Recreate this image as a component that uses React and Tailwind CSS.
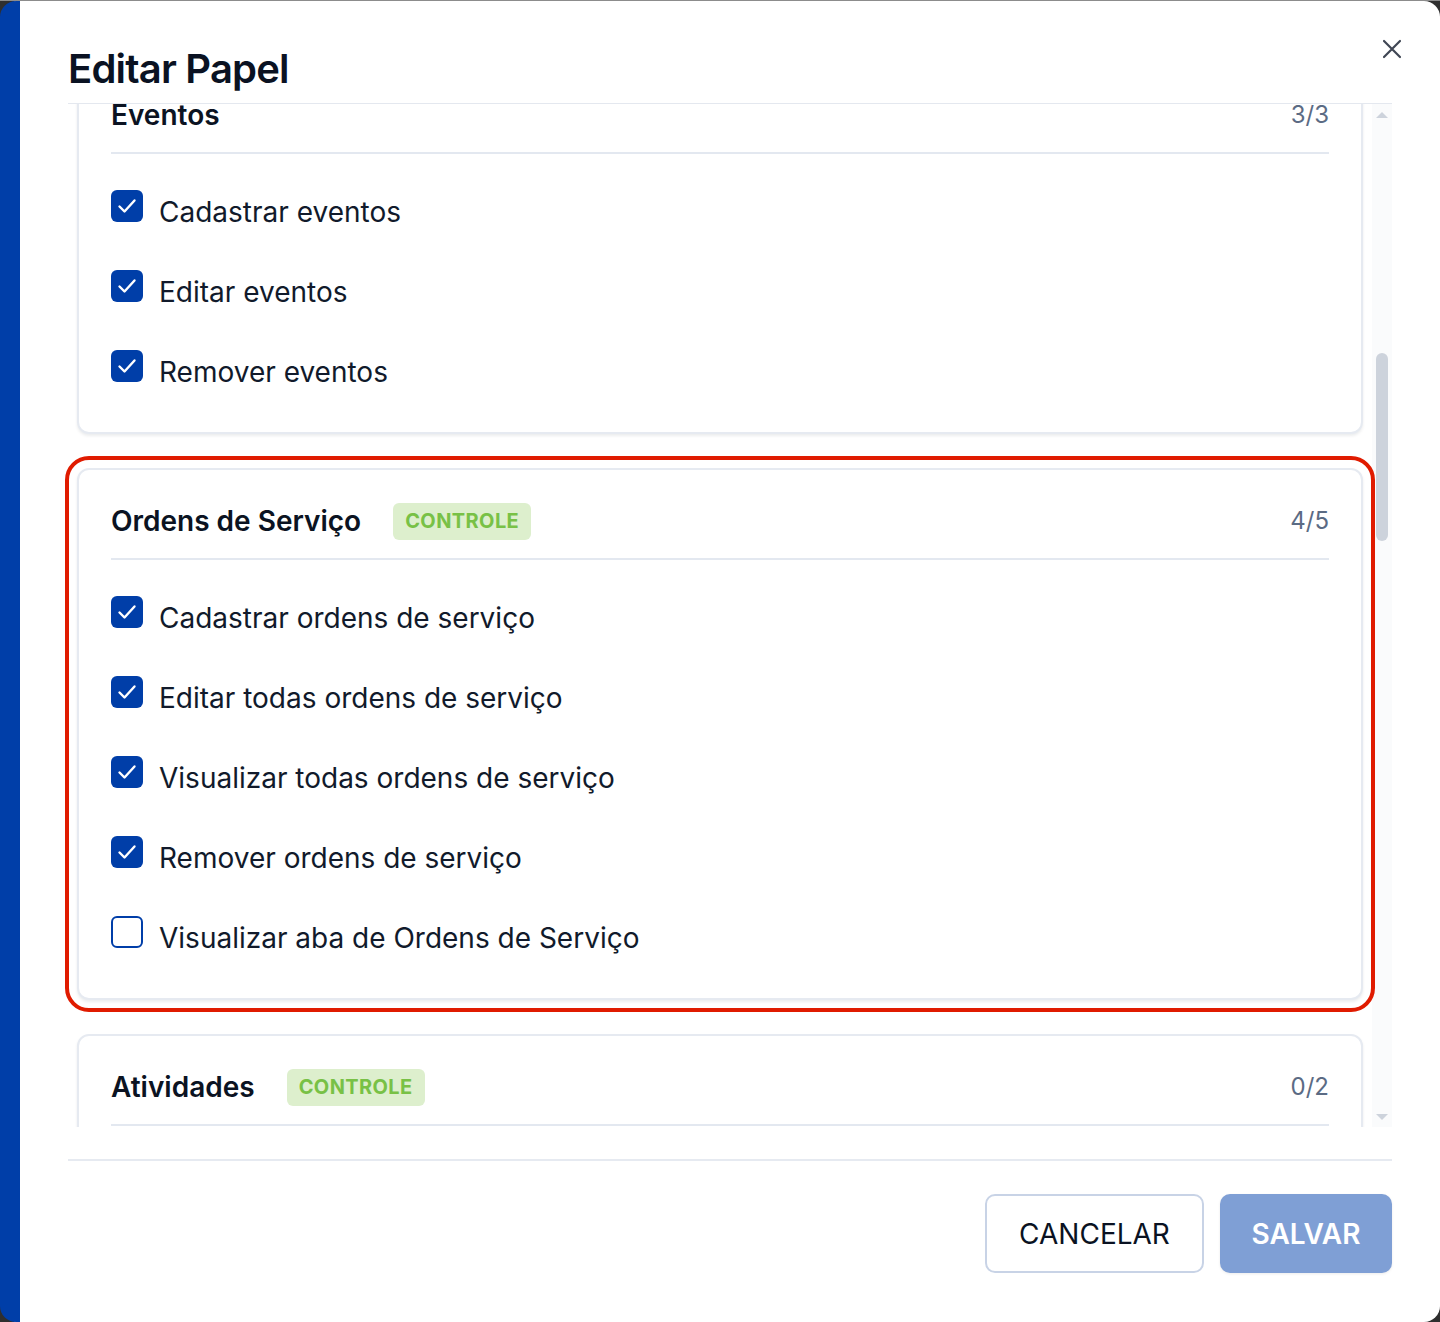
import React from "react";

const grupos = [
  {
    nome: "Eventos",
    controle: false,
    permissoes: [
      { label: "Cadastrar eventos", ativo: true },
      { label: "Editar eventos", ativo: true },
      { label: "Remover eventos", ativo: true },
    ],
  },
  {
    nome: "Ordens de Serviço",
    controle: true,
    destaque: true,
    permissoes: [
      { label: "Cadastrar ordens de serviço", ativo: true },
      { label: "Editar todas ordens de serviço", ativo: true },
      { label: "Visualizar todas ordens de serviço", ativo: true },
      { label: "Remover ordens de serviço", ativo: true },
      { label: "Visualizar aba de Ordens de Serviço", ativo: false },
    ],
  },
  {
    nome: "Atividades",
    controle: true,
    permissoes: [
      { label: "Cadastrar atividades", ativo: false },
      { label: "Remover atividades", ativo: false },
    ],
  },
];

function Checkbox({ ativo }) {
  if (!ativo) {
    return (
      <span className="mb-3 h-8 w-8 shrink-0 rounded-[6px] border-2 border-[#003ea8] bg-white" />
    );
  }
  return (
    <span className="mb-3 flex h-8 w-8 shrink-0 items-center justify-center rounded-[6px] bg-[#003ea8]">
      <svg width="32" height="32" viewBox="0 0 32 32" fill="none">
        <path
          d="M8.5 16.5 13.5 21.5 23.5 10.5"
          stroke="white"
          strokeWidth="2.4"
          strokeLinecap="round"
          strokeLinejoin="round"
        />
      </svg>
    </span>
  );
}

function CardGrupo({ grupo }) {
  const marcados = grupo.permissoes.filter((p) => p.ativo).length;
  return (
    <div
      className={`rounded-[12px] border-2 border-[#e6eaf1] bg-white p-8 shadow-[0_2px_3px_rgba(15,23,42,0.08)] ${
        grupo.destaque ? "outline-4 outline-offset-[8px] outline-[#e01b00]" : ""
      }`}
    >
      <div className="box-content flex h-[38px] items-center border-b-2 border-[#e3e8f0] pb-[18px]">
        <span className="text-[28px] font-semibold text-[#0b1322]">{grupo.nome}</span>
        {grupo.controle && (
          <span className="ml-8 flex h-[37px] items-center rounded-[6px] bg-[#ddefcd] px-3 text-[20px] font-bold tracking-[0.02em] text-[#78c146]">
            CONTROLE
          </span>
        )}
        <span className="ml-auto text-[24px] text-[#5b6b84]">
          {marcados}/{grupo.permissoes.length}
        </span>
      </div>
      <div className="mt-[30px] flex flex-col gap-6">
        {grupo.permissoes.map((p) => (
          <label key={p.label} className="flex h-14 items-center gap-4">
            <Checkbox ativo={p.ativo} />
            <span className="text-[28px] text-[#111a2b]">{p.label}</span>
          </label>
        ))}
      </div>
    </div>
  );
}

export default function App() {
  return (
    <div
      className="h-[1322px] border-t border-[#8c8c8c] bg-[#2f2f2f]"
      style={{ fontFamily: "Inter, 'Noto Sans', sans-serif" }}
    >
      <div className="relative flex h-[1321px] flex-col overflow-hidden rounded-[16px] border-l-[20px] border-[#003ea8] bg-white">
        <button className="absolute right-[38px] top-[38px] flex h-5 w-5 items-center justify-center text-[#3f4654]">
          <svg width="20" height="20" viewBox="0 0 20 20" fill="none">
            <path d="M2 2 18 18M18 2 2 18" stroke="currentColor" strokeWidth="2.2" strokeLinecap="round" />
          </svg>
        </button>

        <div className="mx-12 border-b border-[#e4e8ef] pb-[10px] pt-[44px]">
          <h2 className="text-[40px] font-semibold leading-[48px] tracking-[-0.02em] text-[#0a1222]">
            Editar Papel
          </h2>
        </div>

        <div className="flex h-[1023px] overflow-hidden px-12">
          {/* relative keeps the highlight outline above the scrollbar track */}
          <div className="relative flex-1 px-[9px]">
            <div className="-mt-[42px] flex flex-col gap-[34px]">
              {grupos.map((g) => (
                <CardGrupo key={g.nome} grupo={g} />
              ))}
            </div>
          </div>
          <div className="flex w-5 shrink-0 flex-col items-center bg-[#fafbfc]">
            <svg className="mt-[8px]" width="12" height="6" viewBox="0 0 12 6">
              <path d="M6 0 12 6H0z" fill="#cdd3dc" />
            </svg>
            <div className="mt-[235px] h-[188px] w-3 rounded-full bg-[#cdd3dc]" />
            <svg className="mb-[7px] mt-auto" width="12" height="6" viewBox="0 0 12 6">
              <path d="M0 0H12L6 6z" fill="#cdd3dc" />
            </svg>
          </div>
        </div>

        <div className="mx-12 mt-8 flex justify-end gap-4 border-t-2 border-[#e6eaf1] pt-[33px]">
          <button className="flex h-[79px] w-[219px] items-center justify-center rounded-[10px] border-2 border-[#c8d3e6] bg-white text-[28px] text-[#0a1222]">
            CANCELAR
          </button>
          <button className="flex h-[79px] w-[172px] items-center justify-center rounded-[10px] bg-[#7f9fd5] text-[28px] font-semibold text-white shadow-[0_1px_3px_rgba(0,0,0,0.08)]">
            SALVAR
          </button>
        </div>
      </div>
    </div>
  );
}
